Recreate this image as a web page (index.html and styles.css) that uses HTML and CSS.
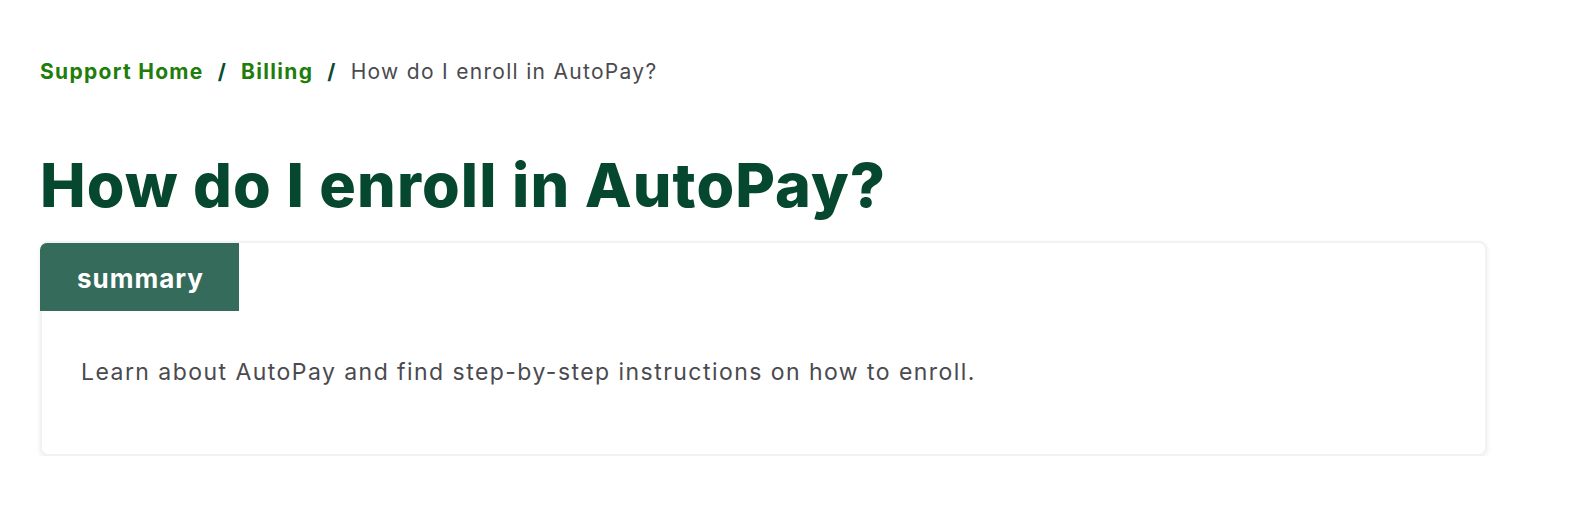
FILE: index.html
```html
<!DOCTYPE html>
<html lang="en">
<head>
<meta charset="utf-8">
<title>How do I enroll in AutoPay?</title>
<link rel="stylesheet" href="styles.css">
</head>
<body>
<main class="page">
  <nav class="breadcrumb">
    <a href="#" class="crumb-link">Support Home</a>
    <span class="sep">/</span>
    <a href="#" class="crumb-link">Billing</a>
    <span class="sep">/</span>
    <span class="crumb-current">How do I enroll in AutoPay?</span>
  </nav>
  <h1 class="title">How do I enroll in AutoPay?</h1>
  <section class="card">
    <div class="tab">summary</div>
    <p class="summary-text">Learn about AutoPay and find step-by-step instructions on how to enroll.</p>
  </section>
</main>
</body>
</html>
```
FILE: styles.css
```css
html, body {
  margin: 0;
  padding: 0;
  background: #ffffff;
}
body {
  font-family: "Inter", "Liberation Sans", sans-serif;
}
.page {
  padding: 58px 85px 0 40px;
}
.breadcrumb {
  display: flex;
  align-items: center;
  gap: 14px;
  font-size: 21px;
  line-height: 28px;
  letter-spacing: 1.3px;
}
.crumb-link {
  color: #1f7d0b;
  font-weight: 700;
  text-decoration: none;
}
.sep {
  color: #0b4a33;
  font-weight: 700;
}
.crumb-current {
  color: #4a4a4f;
  font-weight: 400;
}
.title {
  margin: 62px 0 0;
  font-size: 61px;
  line-height: 74px;
  font-weight: 800;
  letter-spacing: 1.1px;
  color: #06482f;
}
.card {
  margin-top: 19px;
  background: #fff;
  border: 2px solid #f2f2f2;
  border-radius: 8px;
  box-shadow: 0 2px 5px rgba(0, 0, 0, 0.08);
  padding-bottom: 67px;
}
.tab {
  display: inline-block;
  margin-left: -2px;
  border-top-left-radius: 7px;
  background: #356b5a;
  color: #ffffff;
  font-size: 26px;
  font-weight: 700;
  line-height: 64px;
  padding: 4px 35px 0 37px;
  letter-spacing: 1px;
}
.summary-text {
  margin: 46px 0 0 39px;
  font-size: 23px;
  line-height: 30px;
  letter-spacing: 1.45px;
  color: #4a4a4f;
}
```
